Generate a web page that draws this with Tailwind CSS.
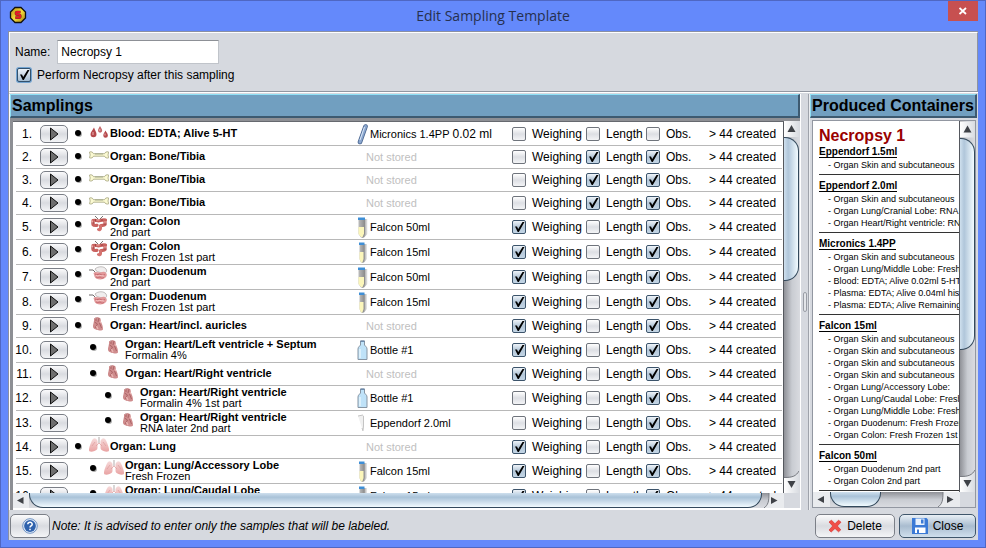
<!DOCTYPE html>
<html lang="en">
<head>
<meta charset="utf-8">
<title>Edit Sampling Template</title>
<script src="https://cdn.jsdelivr.net/npm/@tailwindcss/browser@4"></script>
</head>
<body class="h-screen overflow-hidden bg-[#6489fb] font-['Liberation_Sans',Arial,sans-serif] text-xs text-black">

<!-- Shared icon shapes -->
<svg class="absolute size-0" aria-hidden="true">
  <defs>
    <linearGradient id="g-lung" x1="0" y1="0" x2="0" y2="1"><stop offset="0" stop-color="#f6dada"/><stop offset="1" stop-color="#e9a3a3"/></linearGradient>
    <linearGradient id="g-glass" x1="0" y1="0" x2="1" y2="0"><stop offset="0" stop-color="#bcbcbc"/><stop offset="1" stop-color="#8a8a8a"/></linearGradient>
    <linearGradient id="g-shade" x1="0" y1="0" x2="1" y2="0"><stop offset="0" stop-color="#6a6a6a"/><stop offset="1" stop-color="#ededed"/></linearGradient>
    <linearGradient id="g-gold" x1="0" y1="0" x2="1" y2="1"><stop offset="0" stop-color="#b98a10"/><stop offset=".5" stop-color="#f4dc3c"/><stop offset="1" stop-color="#a87c10"/></linearGradient>
    <linearGradient id="g-btn" x1="0" y1="0" x2="1" y2="0"><stop offset="0" stop-color="#fff"/><stop offset="1" stop-color="#d9dce1"/></linearGradient>
  </defs>
  <symbol id="i-blood" viewBox="0 0 20 16">
    <path d="M5 3.500C3.500 6.500 1.500 8 1.500 10.200a3 3 0 0 0 6 0C7.500 8 6 6.500 5 3.500z" fill="#b5484c"/>
    <path d="M11 2C10 4 9 5 9 6.600a2.100 2.100 0 0 0 4.200 0C13.200 5 12 4 11 2z" fill="#c4686b"/>
    <path d="M16.500 6.500C15.500 8.500 14.300 9.800 14.300 11.400a2.300 2.300 0 0 0 4.600 0C18.900 9.800 17.500 8.500 16.500 6.500z" fill="#b5484c"/>
    <path d="M4 8v3M10.800 5v2M16 9.500v2" stroke="#eab4b4" stroke-width="1"/>
  </symbol>
  <symbol id="i-bone" viewBox="0 0 20 16">
    <path d="M.5 5c2-.8 3.500.4 4 1.700h11C16 5.400 17.500 4.200 19.700 5L19 8l.7 2.800c-2 .8-3.700-.3-4.200-1.600h-11C4 10.500 2.500 11.600.5 10.800L1.200 8z" fill="#fbfad2" stroke="#a3a27c" stroke-width=".8"/>
    <path d="M6 7h8" stroke="#8f9a80" stroke-width=".7"/>
  </symbol>
  <symbol id="i-colon" viewBox="0 0 20 16">
    <path d="M6 0l3 3M14 0l-3 3" stroke="#7a7470" stroke-width="1"/>
    <path d="M4 4.500c3-1 4 .8 6 .3s4-1.500 6.500-.8M4 4.500V8.500c1 1.500 2.500 1 4 .8M16 5v3.500c-1 1.300-3 .5-4.500 1.300" fill="none" stroke="#c9625f" stroke-width="3.200" stroke-linecap="round"/>
    <path d="M11.500 10v2.500a1.200 1.200 0 0 1-2 1" fill="none" stroke="#d4736f" stroke-width="3" stroke-linecap="round"/>
    <path d="M3.500 4.500v3M7.500 4h3M16 5v3" stroke="#eba9a4" stroke-width="1"/>
    <path d="M2.500 7h3M6.500 3v2.500M13 3v2M14.500 8h3" stroke="#8e3436" stroke-width=".7"/>
  </symbol>
  <symbol id="i-duo" viewBox="0 0 20 16">
    <path d="M6 3c3-3 9-3 11 0s-1 5-4 4S7 6 6 3z" fill="#f0eeee" stroke="#a9a3a3" stroke-width=".7"/>
    <path d="M0 4h4l3 3" fill="none" stroke="#6f6a6a" stroke-width="1"/>
    <path d="M4.500 7c2-2 5 0 7-.5S15 5 17 7s0 5-3 6-8 0-8.500-2.500z" fill="#e29a9b"/>
    <path d="M6 8c2 2 4-1 6 .5s3 0 4 0M7 11c2 1.500 4-1 5 .5s2 0 3 0" fill="none" stroke="#c2636a" stroke-width=".9"/>
    <path d="M7 9.500c2 1 4-1 8 .5" fill="none" stroke="#f6c3c3" stroke-width="1"/>
  </symbol>
  <symbol id="i-heart" viewBox="0 0 20 16">
    <path d="M5 2l2 .5 1-1.500 2 .5 1.500 1L12 6c1.500 2.500 2 5 2 7.500-1 1.200-3 1-4.500.7S4.500 13.300 4 11 5.500 6 5 2z" fill="#cf8c8d"/>
    <path d="M7 1v4M10 2l-1 4M5.500 6l3 2-2.500 4M10.500 7l2 5" fill="none" stroke="#9c5558" stroke-width=".7"/>
    <path d="M7.500 10l1.500 3M11 5l1 2" stroke="#ecb9b6" stroke-width="1.200"/>
  </symbol>
  <symbol id="i-lung" viewBox="0 0 20 16">
    <path d="M8.500 4C7 .5 4.500.5 3 3.500S-.5 12 0 13.500s3 1.500 5.500.5 3-1.500 3-4z" fill="url(#g-lung)"/>
    <path d="M11.500 4C13 .5 15.500.5 17 3.500s3.500 8.500 3 10-3 1.500-5.500.5-3-1.500-3-4z" fill="url(#g-lung)"/>
    <path d="M10 6L7 9M10 6l3 3M3 9l3-4M17 9l-3-4" fill="none" stroke="#dc9c9c" stroke-width=".7"/>
    <path d="M10 0v6" stroke="#c9c4c4" stroke-width="1.400"/>
  </symbol>
  <symbol id="c-micronics" viewBox="0 0 12 21"><path d="M8.500 2.500L3 18" stroke="#4a658f" stroke-width="4.600" stroke-linecap="round"/><path d="M8.500 2.500L3 18" stroke="#8ba7cf" stroke-width="3" stroke-linecap="round"/><path d="M7.500 3L3 16" stroke="#dbe8f8" stroke-width="1"/></symbol>
  <symbol id="c-falcon50" viewBox="0 0 12 21"><path d="M6 2h4.500v15L7 20.500H5z" fill="url(#g-shade)"/><path d="M1.500 3H8v14l-2 3.500H4L1.500 17z" fill="url(#g-glass)"/><path d="M1.500 10h5.500v6.500l-1.500 3.500H4l-2.500-3z" fill="#fbf6bb"/><path d="M1 .5h7V3H1z" fill="#3f8fd6"/></symbol>
  <symbol id="c-falcon15" viewBox="0 0 12 21"><path d="M6 2h4v15l-3 3.500H5z" fill="url(#g-shade)"/><path d="M2.500 3h5v14L6 20.500H4L2.500 17z" fill="url(#g-glass)"/><path d="M2.500 10h4v7l-1.200 3.500H4L2.500 17z" fill="#fbf6bb"/><path d="M2 .5h5.500V3H2z" fill="#3f8fd6"/></symbol>
  <symbol id="c-bottle" viewBox="0 0 12 21"><path d="M3.500 1h4v4c1 1.500 2.500 2 2.500 4v10.500H1V9c0-2 1.500-2.500 2.500-4z" fill="#bfe2f8" stroke="#8795a3" stroke-width="1"/><path d="M3 9v9" stroke="#e6f5fd" stroke-width="1.500"/><path d="M3.500 1.200h4" stroke="#5f7fa5" stroke-width="1.200"/></symbol>
  <symbol id="c-eppendorf" viewBox="0 0 12 21"><path d="M1 3l6-1v10l-1 5.500L4 12z" fill="#f0f0f0"/><path d="M1 3l5-1M6.500 3v10l-.5 4.500M5 15l1 3" fill="none" stroke="#c4c4c4" stroke-width="1"/></symbol>
  <symbol id="tick" viewBox="0 0 14 14"><path d="M3 6.500h2L6.200 9 10.500 2h2L6.800 12H5.700z" fill="#000"/></symbol>
</svg>

<div class="flex h-full flex-col border border-[#4f67c3] px-[7px] pb-[7px]">

  <!-- Title bar -->
  <header class="grid h-[30px] shrink-0 grid-cols-[1fr_auto_1fr] items-start">
    <svg class="mt-[5px] ml-[1px] size-[18px]" viewBox="0 0 18 18"><path d="M6 1.500h6L16.500 6v6L12 16.500H6L1.500 12V6z" fill="url(#g-gold)" stroke="#111" stroke-width="1.300"/><path d="M11.500 6H8c-1.400 0-1.400 2.700 0 2.700h2.200c1.500 0 1.500 2.900 0 2.900H6.300" fill="none" stroke="#7a3a10" stroke-width="2.600"/><path d="M11.500 6H8c-1.400 0-1.400 2.700 0 2.700h2.200c1.500 0 1.500 2.900 0 2.900H6.300" fill="none" stroke="#e8152c" stroke-width="1.800"/></svg>
    <h1 class="pt-1 font-['Open_Sans','Noto_Sans',sans-serif] text-sm leading-[22px] text-[#26304f]">Edit Sampling Template</h1>
    <button type="button" aria-label="Close window" class="flex h-5 w-[30px] items-center justify-center justify-self-end bg-[#c75050]"><svg class="size-2" viewBox="0 0 8 8"><path d="M.5 1l6.500 6M7 1L.5 7" stroke="#fff" stroke-width="1.800"/></svg></button>
  </header>

  <div class="flex min-h-0 flex-1 flex-col border-t border-l border-[#8a90a4] bg-[#d6d9df]">

    <!-- Template properties -->
    <section class="flex h-[60px] shrink-0 flex-col border-t border-r border-b border-l border-t-white border-r-[#8f949e] border-b-[#9297a1] border-l-white px-[5px] pt-[7px]">
      <div class="flex items-center gap-[7px]">
        <label for="name">Name:</label>
        <input id="name" type="text" value="Necropsy 1" class="h-6 w-[162px] border border-[#c0c4ca] border-t-[#8d9096] bg-white px-[3px]">
      </div>
      <label class="mt-[3px] flex items-center gap-[5px] pl-px">
        <span class="grid size-4 place-items-center rounded-[3px] bg-[#73a4d1]"><input type="checkbox" checked class="size-[14px] appearance-none rounded-[2px] border border-[#33516d] bg-linear-to-b from-[#eef3f8] to-[#a5bcd1] [grid-area:1/1]"><svg class="size-[14px] [grid-area:1/1]"><use href="#tick"/></svg></span>
        Perform Necropsy after this sampling
      </label>
    </section>

    <div class="flex min-h-0 flex-1 border-t border-white pt-px">

      <!-- Samplings -->
      <section class="flex min-w-0 flex-1 flex-col border-l border-white">
        <h2 class="h-6 shrink-0 border-t border-r-2 border-b-2 border-l border-t-[#8fe0f5] border-r-[#3d5a70] border-b-[#3d5a70] border-l-[#8fe0f5] bg-[#719fc0] pl-px text-base leading-[22px] font-bold">Samplings</h2>
        <div class="flex min-h-0 flex-1 flex-col border-t-[3px] border-l-[3px] border-t-[#8d8f94] border-l-[#8d8f94]">
          <div class="flex min-h-0 flex-1">
            <div class="min-w-0 flex-1 overflow-hidden border-t border-r border-t-[#66696f] border-r-[#55585e] bg-white pt-px pr-px pl-[3px]">
              <table class="w-full table-fixed border-separate border-spacing-0">
                <colgroup><col class="w-6"><col class="w-7"><col><col class="w-[155px]"><col class="w-[74px]"><col class="w-[60px]"><col class="w-[63px]"><col class="w-[73px]"></colgroup>
                <tbody id="rows"></tbody>
              </table>
            </div>
            <div class="flex w-4 shrink-0 flex-col bg-linear-to-r from-[#909298] via-[#c9ccd2] to-[#d9dbe0] pr-px" aria-hidden="true">
              <svg class="h-4 w-[15px] shrink-0" viewBox="0 0 15 16"><path d="M0 0h15v16H0z" fill="url(#g-btn)"/><path d="M3.500 11L7.500 4l4 7z" fill="#3f4247"/></svg>
              <div class="h-36 rounded-r-[14px] border-y border-r border-[#33495c] bg-linear-to-r from-[#cfe0ee] via-[#b0c6da] via-30% to-[#f2fbff]"></div>
              <svg class="mt-auto h-[22px] w-[15px] shrink-0" viewBox="0 0 15 22"><path d="M0 7C9 7 12 5 15 0v22H0z" fill="url(#g-btn)"/><path d="M0 6.500C9 6.500 12 5 15 0" fill="none" stroke="#777a80" stroke-width="1"/><path d="M3.500 10L7.500 17l4-7z" fill="#3f4247"/></svg>
            </div>
          </div>
          <div class="flex h-[15px] shrink-0 bg-linear-to-b from-[#909298] via-[#c9ccd2] to-[#d9dbe0]" aria-hidden="true">
            <svg class="h-[15px] w-4 shrink-0" viewBox="0 0 16 15"><path d="M0 0h16v15H0z" fill="#e9ebee"/><path d="M10.500 4L4 7.500l6.500 3.500z" fill="#3f4247"/></svg>
            <div class="mr-[2px] min-w-0 flex-1 rounded-b-[14px] border-x border-b border-[#33495c] bg-linear-to-b from-[#cfe0ee] via-[#a9c2d8] via-30% to-[#f2fbff]"></div>
            <svg class="h-[15px] w-5 shrink-0" viewBox="0 0 20 15"><path d="M5 0c0 9-1 12-5 15h20V0z" fill="#e9ebee"/><path d="M5 0c0 9-1 12-5 15" fill="none" stroke="#777a80"/><path d="M7 4l6.500 3.500L7 11z" fill="#3f4247"/></svg>
            <div class="w-4 shrink-0 bg-[#d6d9df]"></div>
          </div>
          <div class="h-[2px] shrink-0 bg-white"></div>
        </div>
      </section>

      <!-- Splitter -->
      <div class="flex w-[9px] shrink-0 items-center justify-center border-r border-l border-r-[#9fa3ab] border-l-white"><div class="h-5 w-1 rounded-[2px] border border-[#9a9ea6] bg-[#e3e5e9]"></div></div>

      <!-- Produced containers -->
      <section class="flex w-[169px] shrink-0 flex-col border-l border-[#eceef1] pr-px">
        <h2 class="h-6 shrink-0 border-t border-r-2 border-b-2 border-l border-t-[#8fe0f5] border-r-[#3d5a70] border-b-[#3d5a70] border-l-[#8fe0f5] bg-[#719fc0] pl-px text-base leading-[22px] font-bold whitespace-nowrap">Produced Containers</h2>
        <div class="mt-[2px] mr-px mb-[2px] ml-[2px] flex min-h-0 flex-1 flex-col border border-[#9297a1]">
          <div class="flex min-h-0 flex-1">
            <div id="produced" class="min-w-0 flex-1 overflow-hidden border-r border-[#55585e] bg-white pt-[5px] pl-[6px] text-[9px] leading-3 whitespace-nowrap">
              <h3 class="text-base leading-5 font-bold text-[#990000]">Necropsy 1</h3>
            </div>
            <div class="flex w-[15px] shrink-0 flex-col bg-linear-to-r from-[#909298] via-[#c9ccd2] to-[#d9dbe0]" aria-hidden="true">
              <svg class="h-[17px] w-[15px] shrink-0" viewBox="0 0 15 16"><path d="M0 0h15v16H0z" fill="url(#g-btn)"/><path d="M3.500 11L7.500 4l4 7z" fill="#3f4247"/></svg>
              <div class="h-[212px] rounded-r-[14px] border-y border-r border-[#33495c] bg-linear-to-r from-[#cfe0ee] via-[#b0c6da] via-30% to-[#f2fbff]"></div>
              <svg class="mt-auto h-[22px] w-[15px] shrink-0" viewBox="0 0 15 22"><path d="M0 7C9 7 12 5 15 0v22H0z" fill="url(#g-btn)"/><path d="M0 6.500C9 6.500 12 5 15 0" fill="none" stroke="#777a80" stroke-width="1"/><path d="M3.500 10L7.500 17l4-7z" fill="#3f4247"/></svg>
            </div>
          </div>
          <div class="flex h-[15px] shrink-0 bg-linear-to-b from-[#909298] via-[#c9ccd2] to-[#d9dbe0]" aria-hidden="true">
            <svg class="h-[15px] w-[17px] shrink-0" viewBox="0 0 17 15"><path d="M0 0h17v15H0z" fill="#e9ebee"/><path d="M11 4L4.500 7.500 11 11z" fill="#3f4247"/></svg>
            <div class="w-[51px] rounded-b-[14px] border-x border-b border-[#33495c] bg-linear-to-b from-[#cfe0ee] via-[#a9c2d8] via-30% to-[#f2fbff]"></div>
            <svg class="ml-auto h-[15px] w-[22px] shrink-0" viewBox="0 0 22 15"><path d="M5 0c0 9-1 12-5 15h22V0z" fill="#e9ebee"/><path d="M5 0c0 9-1 12-5 15" fill="none" stroke="#777a80"/><path d="M9 4l6.500 3.500L9 11z" fill="#3f4247"/></svg>
            <div class="w-[15px] shrink-0 bg-[#d6d9df]"></div>
          </div>
        </div>
      </section>
    </div>

    <!-- Actions -->
    <footer class="flex h-[30px] shrink-0 items-center gap-[2px] px-px pt-[2px]">
      <button type="button" aria-label="Help" class="flex h-6 w-10 items-center justify-center rounded-[5px] border border-[#7b7f87] bg-linear-to-b from-[#fbfbfc] via-[#d9dbe0] to-[#f4f5f7]">
        <svg class="size-4" viewBox="0 0 16 16"><circle cx="8" cy="8" r="7.300" fill="#e8f0fb" stroke="#6f93c4"/><circle cx="8" cy="8" r="5.900" fill="#2f62ad"/><path d="M5.800 6.300C5.900 3.500 10.200 3.600 10.200 6.200c0 1.700-2.200 1.700-2.200 3.400M8 10.800v1.400" fill="none" stroke="#fff" stroke-width="1.500"/></svg>
      </button>
      <p class="flex-1 italic">Note: It is advised to enter only the samples that will be labeled.</p>
      <button type="button" class="flex h-6 w-20 items-center justify-center gap-[5px] rounded-[5px] border border-[#7b7f87] bg-linear-to-b from-[#fbfbfc] via-[#d9dbe0] to-[#f4f5f7]">
        <svg class="size-[14px]" viewBox="0 0 14 14"><path d="M3.500 1.200L7 4.800l3.500-3.600L13 3.200 9.300 7l3.500 3.800-2.300 2L7 9.400l-3.800 3.600-2.200-2L4.700 7 1 3z" fill="#f04e48" stroke="#d9332f" stroke-width=".7"/></svg>Delete
      </button>
      <button type="button" class="mr-px ml-[2px] flex h-6 w-[77px] items-center justify-center gap-[5px] rounded-[5px] border border-[#3f566b] bg-linear-to-b from-[#e9f0f6] via-[#a9bccf] to-[#cfdfed]">
        <svg class="size-4" viewBox="0 0 16 16"><path d="M0 0h14.500L16 1.500V16H0z" fill="#3b7ad6"/><path d="M3.500.5h9V7h-9z" fill="#e8f1fc"/><path d="M9 1.500h2.500v4H9z" fill="#3b7ad6"/><path d="M3 9.500h10.500V15H3z" fill="#fff"/><path d="M5 11.500h2V15H5z" fill="#3b7ad6"/></svg>Close
      </button>
    </footer>
  </div>
</div>

<script>
// level, icon, title, detail, container icon, container, volume, [weighing, length, obs]
const samplings = [
  [0, 'blood', 'Blood: EDTA; Alive 5-HT', '', 'micronics', 'Micronics 1.4PP', '0.02 ml', [0, 0, 0]],
  [0, 'bone', 'Organ: Bone/Tibia', '', '', '', '', [0, 1, 1]],
  [0, 'bone', 'Organ: Bone/Tibia', '', '', '', '', [0, 1, 1]],
  [0, 'bone', 'Organ: Bone/Tibia', '', '', '', '', [0, 1, 1]],
  [0, 'colon', 'Organ: Colon', '2nd part', 'falcon50', 'Falcon 50ml', '', [1, 0, 1]],
  [0, 'colon', 'Organ: Colon', 'Fresh Frozen 1st part', 'falcon15', 'Falcon 15ml', '', [1, 0, 1]],
  [0, 'duo', 'Organ: Duodenum', '2nd part', 'falcon50', 'Falcon 50ml', '', [1, 0, 1]],
  [0, 'duo', 'Organ: Duodenum', 'Fresh Frozen 1st part', 'falcon15', 'Falcon 15ml', '', [1, 0, 1]],
  [0, 'heart', 'Organ: Heart/incl. auricles', '', '', '', '', [1, 0, 1]],
  [1, 'heart', 'Organ: Heart/Left ventricle + Septum', 'Formalin 4%', 'bottle', 'Bottle #1', '', [1, 0, 1]],
  [1, 'heart', 'Organ: Heart/Right ventricle', '', '', '', '', [1, 0, 1]],
  [2, 'heart', 'Organ: Heart/Right ventricle', 'Formalin 4% 1st part', 'bottle', 'Bottle #1', '', [0, 0, 1]],
  [2, 'heart', 'Organ: Heart/Right ventricle', 'RNA later 2nd part', 'eppendorf', 'Eppendorf 2.0ml', '', [0, 0, 1]],
  [0, 'lung', 'Organ: Lung', '', '', '', '', [1, 0, 1]],
  [1, 'lung', 'Organ: Lung/Accessory Lobe', 'Fresh Frozen', 'falcon15', 'Falcon 15ml', '', [1, 0, 1]],
  [1, 'lung', 'Organ: Lung/Caudal Lobe', 'Fresh Frozen', 'falcon15', 'Falcon 15ml', '', [1, 0, 1]],
];
const indent = ['pl-[7px]', 'pl-[22px]', 'pl-[37px]'];
const cell = 'border-b border-[#b8b8b8] p-0';

const box = (on, text) => `<td class="${cell}"><label class="flex items-center gap-[6px] whitespace-nowrap"><span class="grid size-[14px] shrink-0"><input type="checkbox" ${on ? 'checked' : ''} class="peer size-[14px] appearance-none rounded-[2px] border border-[#6f747c] bg-linear-to-b from-white via-[#dddfe4] to-[#f3f4f6] [grid-area:1/1] checked:border-[#3c546b] checked:from-[#eff4f9] checked:via-[#b4c7d8] checked:to-[#c3d5e5]"><svg class="pointer-events-none hidden size-[14px] [grid-area:1/1] peer-checked:block"><use href="#tick"/></svg></span>${text}</label></td>`;

document.getElementById('rows').innerHTML = samplings.map(([level, icon, title, detail, tube, name, volume, [w, l, o]], i) => `
  <tr class="${detail ? 'h-[25px]' : 'h-[23px]'}">
    <td class="${cell} pr-2 text-right"><div class="flex justify-end">${i + 1}.</div></td>
    <td class="${cell}"><button type="button" aria-label="Show sampling ${i + 1}" class="flex h-[18px] w-7 items-center justify-center rounded-[5px] border border-[#7b7f87] bg-linear-to-b from-[#fbfbfc] via-[#d9dbe0] to-[#f4f5f7] pl-px"><svg class="h-[14px] w-[9px]" viewBox="0 0 9 14"><path d="M.5 1L8 7 .5 13z" fill="#6e6e6e" stroke="#111" stroke-width="1"/></svg></button></td>
    <td class="${cell} pr-[35px] align-top">
      <div class="flex overflow-hidden ${indent[level]}">
        <span class="${detail ? 'mt-[6px]' : 'mt-[7px]'} size-[6px] shrink-0 rounded-full bg-black shadow-[1px_1px_0_#aaa]"></span>
        <svg class="ml-2 mt-px h-4 w-5 shrink-0"><use href="#i-${icon}"/></svg>
        <div class="ml-px text-[11px] whitespace-nowrap">
          <div class="${detail ? 'leading-3' : 'leading-5'} font-bold">${title}</div>
          ${detail ? `<div class="leading-[10px]">${detail}</div>` : ''}
        </div>
      </div>
    </td>
    <td class="${cell}">${tube
      ? `<div class="flex items-center gap-px text-[11px] whitespace-nowrap"><svg class="h-[21px] w-3 shrink-0"><use href="#c-${tube}"/></svg>${name}${volume ? `<span class="ml-[2px] text-xs">${volume}</span>` : ''}</div>`
      : '<div class="pl-[9px] text-[11px] text-[#c0c0c0]">Not stored</div>'}</td>
    ${box(w, 'Weighing')}${box(l, 'Length')}${box(o, 'Obs.')}
    <td class="${cell} whitespace-nowrap">&gt; 44 created</td>
  </tr>`).join('');

const produced = [
  ['Eppendorf 1.5ml', ['Organ Skin and subcutaneous']],
  ['Eppendorf 2.0ml', ['Organ Skin and subcutaneous', 'Organ Lung/Cranial Lobe: RNA', 'Organ Heart/Right ventricle: RNA']],
  ['Micronics 1.4PP', ['Organ Skin and subcutaneous', 'Organ Lung/Middle Lobe: Fresh', 'Blood: EDTA; Alive 0.02ml 5-HT', 'Plasma: EDTA; Alive 0.04ml his', 'Plasma: EDTA; Alive Remaining']],
  ['Falcon 15ml', ['Organ Skin and subcutaneous', 'Organ Skin and subcutaneous', 'Organ Skin and subcutaneous', 'Organ Skin and subcutaneous', 'Organ Lung/Accessory Lobe:', 'Organ Lung/Caudal Lobe: Fresh', 'Organ Lung/Middle Lobe: Fresh', 'Organ Duodenum: Fresh Frozen', 'Organ Colon: Fresh Frozen 1st']],
  ['Falcon 50ml', ['Organ Duodenum 2nd part', 'Organ Colon 2nd part']],
];
document.getElementById('produced').insertAdjacentHTML('beforeend', produced.map(([name, items]) => `
  <section class="mb-[5px] border-b border-[#333] pb-[3px]">
    <h4 class="mb-px text-[10px] leading-3 font-bold"><span class="border-b border-black">${name}</span></h4>
    <ul class="pl-[9px]">${items.map(t => `<li>- ${t}</li>`).join('')}</ul>
  </section>`).join(''));
</script>
</body>
</html>
